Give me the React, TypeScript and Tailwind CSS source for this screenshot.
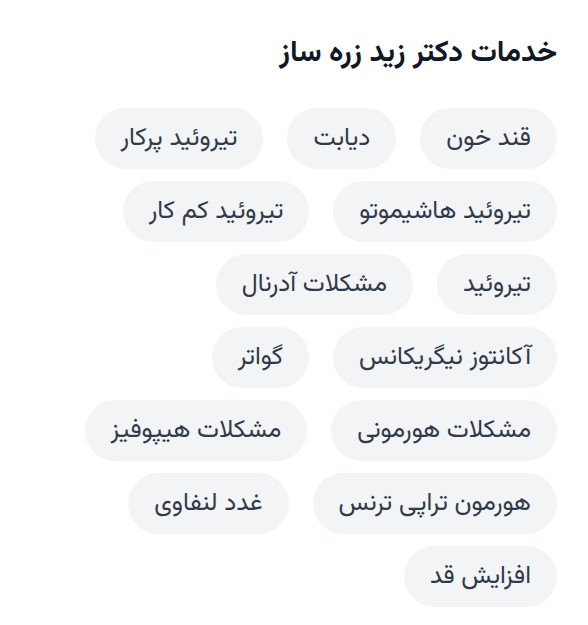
import React from "react";

const services = [
  "قند خون",
  "دیابت",
  "تیروئید پرکار",
  "تیروئید هاشیموتو",
  "تیروئید کم کار",
  "تیروئید",
  "مشکلات آدرنال",
  "آکانتوز نیگریکانس",
  "گواتر",
  "مشکلات هورمونی",
  "مشکلات هیپوفیز",
  "هورمون تراپی ترنس",
  "غدد لنفاوی",
  "افزایش قد",
];

const App = () => {
  return (
    <div
      dir="rtl"
      className="min-h-[625px] w-full bg-white px-[31px] pt-[34px] font-['Vazirmatn','Noto_Sans_Arabic','DejaVu_Sans',sans-serif]"
    >
      <h2 className="text-[29.5px] font-bold leading-[40px] text-[#111827]">
        خدمات دکتر زید زره ساز
      </h2>
      <div className="mt-[34px] flex flex-wrap gap-x-6 gap-y-3">
        {services.map((s) => (
          <span
            key={s}
            className="flex h-[61px] items-center rounded-full bg-[#f3f4f6] px-[26px] text-[25px] text-[#2f3a4b]"
          >
            {s}
          </span>
        ))}
      </div>
    </div>
  );
};

export default App;
